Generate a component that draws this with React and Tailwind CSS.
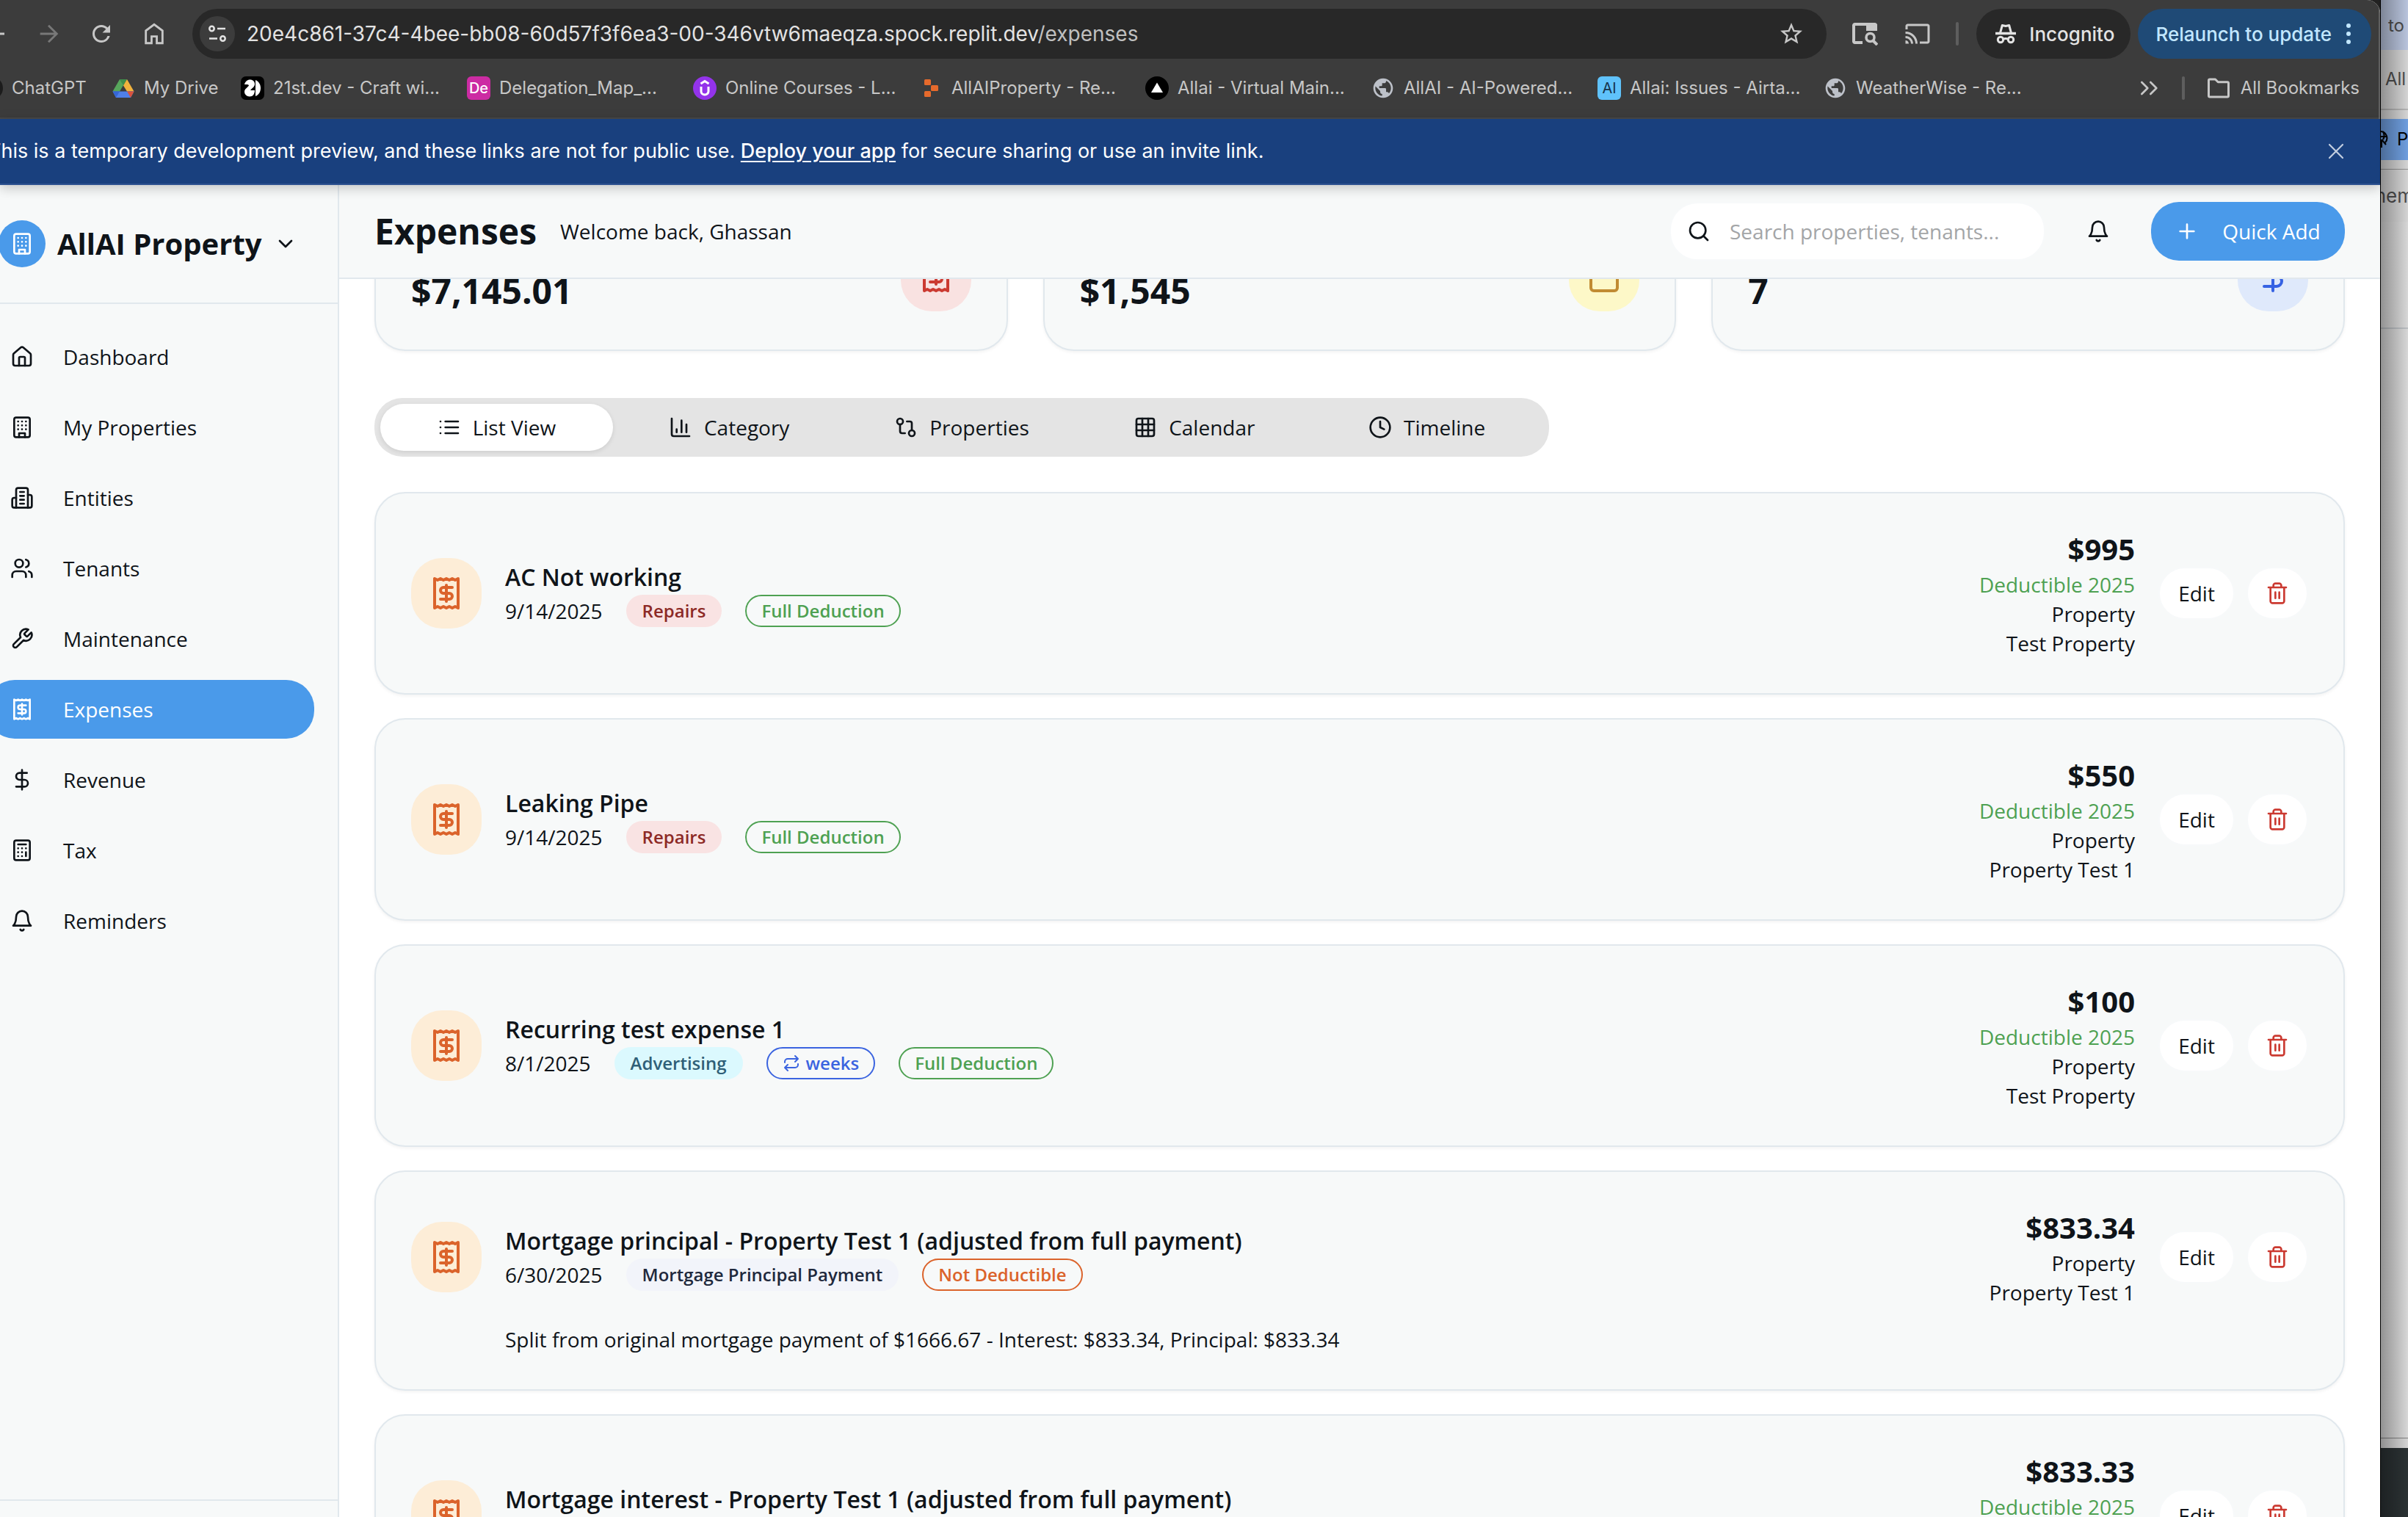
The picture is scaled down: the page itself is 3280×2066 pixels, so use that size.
import React from "react";
import { MdCast, MdRefresh, MdPublic, MdStarOutline } from "react-icons/md";

function Icon({ className = "size-8", strokeWidth = 2, children }) {
  return (
    <svg
      viewBox="0 0 24 24"
      fill="none"
      stroke="currentColor"
      strokeWidth={strokeWidth}
      strokeLinecap="round"
      strokeLinejoin="round"
      aria-hidden="true"
      className={`shrink-0 ${className}`}
    >
      {children}
    </svg>
  );
}

const HouseIcon = (p) => (
  <Icon {...p}>
    <path d="M15 21v-8a1 1 0 0 0-1-1h-4a1 1 0 0 0-1 1v8" />
    <path d="M3 10a2 2 0 0 1 .709-1.528l7-5.999a2 2 0 0 1 2.582 0l7 5.999A2 2 0 0 1 21 10v9a2 2 0 0 1-2 2H5a2 2 0 0 1-2-2z" />
  </Icon>
);
const BuildingIcon = (p) => (
  <Icon {...p}>
    <rect width="16" height="20" x="4" y="2" rx="2" />
    <path d="M9 22v-4h6v4M8 6h.01M16 6h.01M12 6h.01M12 10h.01M12 14h.01M16 10h.01M16 14h.01M8 10h.01M8 14h.01" />
  </Icon>
);
const OfficesIcon = (p) => (
  <Icon {...p}>
    <path d="M6 22V4a2 2 0 0 1 2-2h8a2 2 0 0 1 2 2v18Z" />
    <path d="M6 12H4a2 2 0 0 0-2 2v6a2 2 0 0 0 2 2h2" />
    <path d="M18 9h2a2 2 0 0 1 2 2v9a2 2 0 0 1-2 2h-2" />
    <path d="M10 6h4M10 10h4M10 14h4M10 18h4" />
  </Icon>
);
const UsersIcon = (p) => (
  <Icon {...p}>
    <path d="M16 21v-2a4 4 0 0 0-4-4H6a4 4 0 0 0-4 4v2" />
    <circle cx="9" cy="7" r="4" />
    <path d="M22 21v-2a4 4 0 0 0-3-3.87M16 3.13a4 4 0 0 1 0 7.75" />
  </Icon>
);
const WrenchIcon = (p) => (
  <Icon {...p}>
    <path d="M14.7 6.3a1 1 0 0 0 0 1.4l1.6 1.6a1 1 0 0 0 1.4 0l3.77-3.77a6 6 0 0 1-7.94 7.94l-6.91 6.91a2.12 2.12 0 0 1-3-3l6.91-6.91a6 6 0 0 1 7.94-7.94l-3.76 3.76z" />
  </Icon>
);
const ReceiptIcon = (p) => (
  <Icon {...p}>
    <path d="M4 2v20l2-1 2 1 2-1 2 1 2-1 2 1 2-1 2 1V2l-2 1-2-1-2 1-2-1-2 1-2-1-2 1Z" />
    <path d="M16 8h-6a2 2 0 1 0 0 4h4a2 2 0 1 1 0 4H8M12 17.5v-11" />
  </Icon>
);
const DollarIcon = (p) => (
  <Icon {...p}>
    <path d="M12 2v20M17 5H9.5a3.5 3.5 0 0 0 0 7h5a3.5 3.5 0 0 1 0 7H6" />
  </Icon>
);
const CalculatorIcon = (p) => (
  <Icon {...p}>
    <rect width="16" height="20" x="4" y="2" rx="2" />
    <path d="M8 6h8M16 14v4M16 10h.01M12 10h.01M8 10h.01M12 14h.01M8 14h.01M12 18h.01M8 18h.01" />
  </Icon>
);
const BellIcon = (p) => (
  <Icon {...p}>
    <path d="M6 8a6 6 0 0 1 12 0c0 7 3 9 3 9H3s3-2 3-9" />
    <path d="M10.3 21a1.94 1.94 0 0 0 3.4 0" />
  </Icon>
);
const ListIcon = (p) => (
  <Icon {...p}>
    <path d="M8 6h13M8 12h13M8 18h13M3 6h.01M3 12h.01M3 18h.01" />
  </Icon>
);
const ChartIcon = (p) => (
  <Icon {...p}>
    <path d="M3 3v16a2 2 0 0 0 2 2h16M18 17V9M13 17V5M8 17v-3" />
  </Icon>
);
const CompareIcon = (p) => (
  <Icon {...p}>
    <circle cx="18" cy="18" r="3" />
    <circle cx="6" cy="6" r="3" />
    <path d="M13 6h3a2 2 0 0 1 2 2v7M11 18H8a2 2 0 0 1-2-2V9" />
  </Icon>
);
const GridIcon = (p) => (
  <Icon {...p}>
    <rect width="18" height="18" x="3" y="3" rx="2" />
    <path d="M3 9h18M3 15h18M9 3v18M15 3v18" />
  </Icon>
);
const ClockIcon = (p) => (
  <Icon {...p}>
    <circle cx="12" cy="12" r="10" />
    <path d="M12 6v6l4 2" />
  </Icon>
);
const CalendarIcon = (p) => (
  <Icon {...p}>
    <path d="M8 2v4M16 2v4M3 10h18" />
    <rect width="18" height="18" x="3" y="4" rx="2" />
  </Icon>
);
const TrashIcon = (p) => (
  <Icon {...p}>
    <path d="M3 6h18M19 6v14c0 1-1 2-2 2H7c-1 0-2-1-2-2V6M8 6V4c0-1 1-2 2-2h4c1 0 2 1 2 2v2M10 11v6M14 11v6" />
  </Icon>
);
const RepeatIcon = (p) => (
  <Icon {...p}>
    <path d="m17 2 4 4-4 4M3 11v-1a4 4 0 0 1 4-4h14M7 22l-4-4 4-4M21 13v1a4 4 0 0 1-4 4H3" />
  </Icon>
);
const ArrowIcon = (p) => (
  <Icon strokeWidth={2} {...p}>
    <path strokeLinecap="butt" strokeLinejoin="miter" d="M4 12h15M12 4l8 8-8 8" />
  </Icon>
);

/* ---------- browser chrome ---------- */

function ToolButton({ label, children }) {
  return (
    <button aria-label={label} className="flex h-[68px] w-[72px] shrink-0 items-center justify-center">
      {children}
    </button>
  );
}

function AddressRow() {
  return (
    <div className="-ml-[42px] mt-3 flex h-[68px] items-center pr-3 text-[#c7c7c7]">
      <ToolButton label="Back"><ArrowIcon className="size-9 rotate-180" /></ToolButton>
      <ToolButton label="Forward"><ArrowIcon className="size-[34px] text-[#787878]" /></ToolButton>
      <ToolButton label="Reload"><MdRefresh className="size-9" /></ToolButton>
      <ToolButton label="Home">
        <svg viewBox="0 0 24 24" fill="none" stroke="currentColor" strokeWidth="2" className="size-[34px]" aria-hidden="true">
          <path d="M4 21V9l8-6 8 6v12h-5.500v-6.500h-5V21z" />
        </svg>
      </ToolButton>
      <div className="ml-4 flex h-[68px] min-w-0 flex-1 items-center rounded-full bg-[#282828] pl-[10px] pr-[30px]">
        <button aria-label="Site information" className="mr-4 flex size-12 shrink-0 items-center justify-center rounded-full bg-[#3c3c3c] text-[#e3e3e3]">
          <svg viewBox="0 0 24 24" fill="none" stroke="currentColor" strokeWidth="2.500" className="size-6" aria-hidden="true">
            <circle cx="4.500" cy="5" r="3.200" />
            <path d="M12 5h11M1 18.500h11" />
            <circle cx="19.500" cy="18.500" r="3.200" />
          </svg>
        </button>
        <p className="flex-1 truncate font-[Inter,sans-serif] text-[28px] leading-9 text-[#e3e3e3]">
          20e4c861-37c4-4bee-bb08-60d57f3f6ea3-00-346vtw6maeqza.spock.replit.dev
          <span className="text-[#c0c0c0]">/expenses</span>
        </p>
        <button aria-label="Bookmark this tab"><MdStarOutline className="size-9" /></button>
      </div>
      <div className="ml-4 flex items-center">
        <ToolButton label="Lens search">
          <svg viewBox="0 0 36 32" fill="none" stroke="currentColor" strokeWidth="4" className="h-8 w-9" aria-hidden="true">
            <path d="M15 28H4.500a1.500 1.500 0 0 1-1.500-1.500v-22A1.500 1.500 0 0 1 4.500 3h27A1.500 1.500 0 0 1 33 4.500V11" />
            <path d="M20 3h15v9H20z" fill="currentColor" stroke="none" />
            <circle cx="25.500" cy="21" r="5.500" strokeWidth="3.500" />
            <path d="m29 25 6 6" />
          </svg>
        </ToolButton>
        <ToolButton label="Cast"><MdCast className="size-9" /></ToolButton>
      </div>
      <span className="ml-4 h-8 w-1 rounded-full bg-[#5e5e5e]" />
      <button className="ml-6 flex h-[68px] items-center gap-4 rounded-full bg-[#282828] pl-6 pr-[22px] font-[Inter,sans-serif] text-[26px] font-medium text-[#e3e3e3]">
        <svg viewBox="0 0 32 32" fill="none" stroke="currentColor" strokeWidth="3" className="size-8" aria-hidden="true">
          <path d="M2 15.500h28" strokeWidth="3.500" />
          <path d="M8.500 15 11.300 4.500l4.700 1 4.700-1L23.500 15" strokeLinejoin="round" />
          <circle cx="9" cy="24" r="3.700" />
          <circle cx="23" cy="24" r="3.700" />
          <path d="M12.500 23.500c2-1.200 5-1.200 7 0" />
        </svg>
        Incognito
      </button>
      <button className="ml-[10px] flex h-[68px] items-center gap-5 rounded-full bg-[#1f4a76] pl-6 pr-7 font-[Inter,sans-serif] text-[26px] font-medium text-[#c2e7ff]">
        Relaunch to update
        <span className="flex flex-col gap-[5px]" aria-hidden="true">
          <span className="size-[6px] rounded-full bg-[#c2e7ff]" />
          <span className="size-[6px] rounded-full bg-[#c2e7ff]" />
          <span className="size-[6px] rounded-full bg-[#c2e7ff]" />
        </span>
      </button>
    </div>
  );
}

const chatGptMark = (
  <svg viewBox="0 0 32 32" className="size-8" aria-hidden="true">
    <circle cx="16" cy="16" r="16" fill="#1c1c1c" />
    <circle cx="16" cy="16" r="10" fill="none" stroke="#555" strokeWidth="2" />
  </svg>
);
const driveMark = (
  <svg viewBox="0 0 32 32" className="size-8" aria-hidden="true">
    <path d="M11 4h10l-5 9z" fill="#3f8f4c" />
    <path d="M11 4 1.500 20.500h9.500L16 12z" fill="#57a65c" />
    <path d="M21 4 16 12.500l5 8h9.500z" fill="#f2b33d" />
    <path d="M1.500 20.500h29L26 29H6z" fill="#4f7fe8" />
    <path d="M1.500 20.500H11L6 29z" fill="#3567d6" />
    <path d="M21 20.500h9.500L26 29z" fill="#d9513c" />
  </svg>
);
const twentyFirstMark = (
  <svg viewBox="0 0 32 32" className="size-8" aria-hidden="true">
    <rect width="32" height="32" rx="7" fill="#000" />
    <path d="M5 11C6 7 9 4.500 12.500 4.500c4 0 6.500 2.500 6.500 6 0 4-4 5.500-6 8.500h6c0 5-2.500 8.500-7 8.500-4 0-7-3-7-6.500 0-4 4-5.500 6-8.500 0-1.500-3-1.500-6-1.500z" fill="#fff" />
    <path d="M20 5c4.500 2 7 6 7 11s-2.500 9-7 11z" fill="#fff" />
  </svg>
);
const udemyMark = (
  <svg viewBox="0 0 32 32" className="size-8" aria-hidden="true">
    <circle cx="16" cy="16" r="16" fill="#9333ea" />
    <path d="M11 14v6.500a5 4.500 0 0 0 10 0V14M10.500 10 16 6.500l5.500 3.500" fill="none" stroke="#fff" strokeWidth="3" />
  </svg>
);
const replitMark = (
  <svg viewBox="0 0 32 32" className="size-8" fill="#e66a2c" aria-hidden="true">
    <rect x="7" y="4" width="9" height="8" rx="1.500" />
    <rect x="16" y="12" width="10" height="8" rx="1.500" />
    <rect x="7" y="20" width="9" height="8" rx="1.500" />
  </svg>
);
const vercelMark = (
  <svg viewBox="0 0 32 32" className="size-8" aria-hidden="true">
    <circle cx="16" cy="16" r="16" fill="#000" />
    <path d="m16 8.500 8 13.500H8z" fill="#fff" />
  </svg>
);
const globeMark = <MdPublic className="size-8 text-[#bdc1c9]" />;
const deMark = (
  <span className="flex size-8 items-center justify-center rounded-[6px] bg-[#cc2ca3] font-[Inter,sans-serif] text-[20px] font-medium leading-8 text-white">De</span>
);
const aiMark = (
  <span className="flex size-8 items-center justify-center rounded-[6px] bg-[#5fc2fb] font-[Inter,sans-serif] text-[20px] leading-8 text-[#16324a]">AI</span>
);

const bookmarks = [
  { label: "21st.dev - Craft wi...", mark: twentyFirstMark },
  { label: "Delegation_Map_...", mark: deMark },
  { label: "Online Courses - L...", mark: udemyMark },
  { label: "AllAIProperty - Re...", mark: replitMark },
  { label: "Allai - Virtual Main...", mark: vercelMark },
  { label: "AllAI - AI-Powered...", mark: globeMark },
  { label: "Allai: Issues - Airta...", mark: aiMark },
  { label: "WeatherWise - Re...", mark: globeMark },
];

function Bookmark({ label, mark, className }) {
  return (
    <a href="#bookmark" className={`flex shrink-0 items-center gap-3 whitespace-nowrap ${className}`}>
      <span className="shrink-0">{mark}</span>
      {label}
    </a>
  );
}

function BookmarksRow() {
  return (
    <nav aria-label="Bookmarks" className="-ml-7 flex h-20 items-center pr-7 font-[Inter,sans-serif] text-[24px] leading-8 text-[#c7c7c7]">
      <Bookmark label="ChatGPT" mark={chatGptMark} className="w-[180px]" />
      <Bookmark label="My Drive" mark={driveMark} className="w-[176px]" />
      {bookmarks.map((b) => (
        <Bookmark key={b.label} {...b} className="w-[308px]" />
      ))}
      <button aria-label="More bookmarks" className="ml-auto">
        <Icon className="size-8" strokeWidth={2}><path d="m4 6 6 6-6 6M13 6l6 6-6 6" /></Icon>
      </button>
      <span className="ml-7 h-8 w-1 rounded-full bg-[#5e5e5e]" />
      <a href="#all" className="ml-7 flex items-center gap-3">
        <Icon className="size-9" strokeWidth={2}><path d="M3 5a1 1 0 0 1 1-1h5l2.500 2.500H20a1 1 0 0 1 1 1V19a1 1 0 0 1-1 1H4a1 1 0 0 1-1-1z" /></Icon>
        All Bookmarks
      </a>
    </nav>
  );
}

function PreviewBanner() {
  return (
    <div className="relative z-20 flex h-[90px] shrink-0 items-center justify-between border-b-2 border-[#2f5391] bg-[#19407e] pr-12 font-[Inter,sans-serif] text-[27px] leading-9 text-white shadow-[0_4px_16px_rgba(0,0,0,0.22)]">
      <p className="-ml-4 whitespace-nowrap">
        This is a temporary development preview, and these links are not for public use.{" "}
        <a href="#deploy" className="font-medium underline underline-offset-4">Deploy your app</a>{" "}
        for secure sharing or use an invite link.
      </p>
      <button aria-label="Dismiss" className="text-[#c3cee0]">
        <Icon className="size-6" strokeWidth={2.2}><path d="M3 3l18 18M21 3 3 21" /></Icon>
      </button>
    </div>
  );
}

/* ---------- application ---------- */

const navItems = [
  { label: "Dashboard", icon: HouseIcon },
  { label: "My Properties", icon: BuildingIcon },
  { label: "Entities", icon: OfficesIcon },
  { label: "Tenants", icon: UsersIcon },
  { label: "Maintenance", icon: WrenchIcon },
  { label: "Expenses", icon: ReceiptIcon, active: true },
  { label: "Revenue", icon: DollarIcon },
  { label: "Tax", icon: CalculatorIcon },
  { label: "Reminders", icon: BellIcon },
];

function Sidebar() {
  return (
    <aside className="-ml-[50px] flex w-[512px] shrink-0 flex-col border-r-2 border-[#e1e8ed] bg-[#f7f9f9]">
      <div className="flex h-[162px] shrink-0 items-center gap-4 border-b-2 border-[#e1e8ed] px-12">
        <span className="flex size-16 shrink-0 items-center justify-center rounded-full bg-[#4a9aea] text-white">
          <BuildingIcon />
        </span>
        <button className="flex items-center gap-4 whitespace-nowrap text-[40px] font-bold leading-[56px]">
          AllAI Property
          <Icon><path d="m6 9 6 6 6-6" /></Icon>
        </button>
      </div>
      <nav className="flex flex-1 flex-col gap-4 p-8">
        {navItems.map(({ label, icon: NavIcon, active }) => (
          <a
            key={label}
            href={`#${label}`}
            aria-current={active ? "page" : undefined}
            className={`flex h-20 items-center gap-10 rounded-[38px] px-8 text-[28px] font-medium leading-10 ${
              active ? "bg-[#4a9aea] text-white" : ""
            }`}
          >
            <NavIcon />
            {label}
          </a>
        ))}
      </nav>
      <div className="h-6 shrink-0 border-t-2 border-[#e1e8ed]" />
    </aside>
  );
}

function Header() {
  return (
    <header className="flex h-[128px] shrink-0 items-center border-b-2 border-[#e1e8ed] bg-[#f7f9f9] px-12">
      <h1 className="text-[48px] font-bold leading-[64px]">Expenses</h1>
      <p className="ml-8 flex-1 text-[28px] leading-10">Welcome back, Ghassan</p>
      <label className="relative w-[512px]">
        <span className="absolute inset-y-0 left-6 flex items-center">
          <Icon><circle cx="11" cy="11" r="8" /><path d="m21 21-4.300-4.300" /></Icon>
        </span>
        <input
          type="text"
          aria-label="Search"
          placeholder="Search properties, tenants..."
          className="h-20 w-full rounded-[38px] border-2 border-[#f7f9fa] bg-white pl-20 pr-6 text-[28px] placeholder:text-[#a3a5a7]"
        />
      </label>
      <button aria-label="Notifications" className="ml-8 flex size-20 items-center justify-center">
        <BellIcon />
      </button>
      <button className="ml-8 flex h-20 w-[264px] items-center justify-center gap-8 rounded-[38px] bg-[#4a9aea] text-[28px] font-medium text-white">
        <Icon><path d="M5 12h14M12 5v14" /></Icon>
        Quick Add
      </button>
    </header>
  );
}

const stats = [
  { label: "Total Expenses", value: "$7,145.01", icon: ReceiptIcon, tone: "bg-[#f9e2e1] text-[#cb3a31]" },
  { label: "This Month", value: "$1,545", icon: CalendarIcon, tone: "bg-[#fdf8c8] text-[#c18b33]" },
  { label: "Total Entries", value: "7", icon: DollarIcon, tone: "bg-[#dfe9fb] text-[#3662e3]" },
];

function StatCards() {
  return (
    <section className="grid grid-cols-3 gap-12">
      {stats.map(({ label, value, icon: StatIcon, tone }) => (
        <div
          key={label}
          aria-label={label}
          className="flex items-end justify-between rounded-[42px] border-2 border-[#e1e8ed] bg-[#f7f9f9] p-12 shadow-[0_2px_4px_rgba(0,0,0,0.05)]"
        >
          <p className="text-[48px] font-bold leading-[64px]">{value}</p>
          <span className={`mb-1 flex size-24 items-center justify-center rounded-[42px] ${tone}`}>
            <StatIcon className="size-12" />
          </span>
        </div>
      ))}
    </section>
  );
}

const tabs = [
  { label: "List View", icon: ListIcon, active: true },
  { label: "Category", icon: ChartIcon },
  { label: "Properties", icon: CompareIcon },
  { label: "Calendar", icon: GridIcon },
  { label: "Timeline", icon: ClockIcon },
];

function ViewTabs() {
  return (
    <div role="tablist" className="mt-16 grid max-w-[1600px] grid-cols-5 rounded-[38px] bg-[#e4e4e4] p-2">
      {tabs.map(({ label, icon: TabIcon, active }) => (
        <button
          key={label}
          role="tab"
          aria-selected={!!active}
          className={`flex h-16 items-center justify-center gap-4 rounded-[34px] text-[28px] font-medium ${
            active ? "bg-white shadow-[0_2px_6px_rgba(0,0,0,0.1)]" : ""
          }`}
        >
          <TabIcon />
          {label}
        </button>
      ))}
    </div>
  );
}

const badgeTones = {
  repairs: "border-transparent bg-[#f9e3e3] text-[#8d2a26]",
  advertising: "border-transparent bg-[#dbf9fe] text-[#2f5f78]",
  plain: "border-transparent bg-[#f2f4fa] text-[#1f293d]",
  blue: "border-[#3b64e0] text-[#3b64e0]",
  green: "border-[#4ea152] text-[#4ea152]",
  orange: "border-[#db632b] text-[#db632b]",
};

const fullDeduction = { text: "Full Deduction", tone: "green" };

const expenses = [
  {
    title: "AC Not working",
    date: "9/14/2025",
    badges: [{ text: "Repairs", tone: "repairs" }, fullDeduction],
    amount: "$995",
    deductible: true,
    property: "Test Property",
  },
  {
    title: "Leaking Pipe",
    date: "9/14/2025",
    badges: [{ text: "Repairs", tone: "repairs" }, fullDeduction],
    amount: "$550",
    deductible: true,
    property: "Property Test 1",
  },
  {
    title: "Recurring test expense 1",
    date: "8/1/2025",
    badges: [{ text: "Advertising", tone: "advertising" }, { text: "weeks", tone: "blue", repeat: true }, fullDeduction],
    amount: "$100",
    deductible: true,
    property: "Test Property",
  },
  {
    title: "Mortgage principal - Property Test 1 (adjusted from full payment)",
    date: "6/30/2025",
    badges: [{ text: "Mortgage Principal Payment", tone: "plain" }, { text: "Not Deductible", tone: "orange" }],
    amount: "$833.34",
    property: "Property Test 1",
    note: "Split from original mortgage payment of $1666.67 - Interest: $833.34, Principal: $833.34",
  },
  {
    title: "Mortgage interest - Property Test 1 (adjusted from full payment)",
    date: "6/30/2025",
    badges: [{ text: "Mortgage", tone: "plain" }, fullDeduction],
    amount: "$833.33",
    deductible: true,
    property: "Property Test 1",
  },
];

function ExpenseCard({ title, date, badges, amount, deductible, property, note }) {
  return (
    <li className="rounded-[42px] border-2 border-[#e1e8ed] bg-[#f7f9f9] p-12 shadow-[0_2px_4px_rgba(0,0,0,0.05)]">
      <div className="flex items-center justify-between">
        <div className="flex items-center gap-8">
          <span className="flex size-24 shrink-0 items-center justify-center rounded-[42px] bg-[#fdedd7] text-[#db632b]">
            <ReceiptIcon className="size-12" />
          </span>
          <div>
            <h3 className="text-[32px] font-semibold leading-[48px]">{title}</h3>
            <div className="flex items-center gap-8 text-[28px] leading-10">
              {date}
              {badges.map(({ text, tone, repeat }) => (
                <span key={text} className={`flex items-center gap-2 rounded-full border-2 px-5 py-1 text-[24px] font-semibold leading-8 ${badgeTones[tone]}`}>
                  {repeat && <RepeatIcon className="size-6" />}
                  {text}
                </span>
              ))}
            </div>
          </div>
        </div>
        <div className="flex items-center">
          <div className="mr-8 text-right text-[28px] leading-10">
            <p className="text-[40px] font-bold leading-[56px]">{amount}</p>
            {deductible && <p className="text-[#4ea152]">Deductible 2025</p>}
            <p>Property</p>
            <p>{property}</p>
          </div>
          <button className="mr-4 h-[72px] w-[104px] rounded-[38px] border-2 border-[#f7f9fa] bg-white text-[28px] font-medium">Edit</button>
          <button aria-label={`Delete ${title}`} className="h-[72px] rounded-[38px] border-2 border-[#f7f9fa] bg-white px-6 text-[#cb3a31]">
            <TrashIcon />
          </button>
        </div>
      </div>
      {note && <p className="ml-32 mt-6 text-[28px] leading-10">{note}</p>}
    </li>
  );
}

/* ---------- sliver of the window behind ---------- */

function BackgroundWindow() {
  return (
    <div className="relative flex w-[38px] shrink-0 flex-col overflow-hidden border-l border-black bg-[#dfdfdf] font-[Inter,sans-serif] text-[24px] text-[#505050]">
      <p className="h-[68px] shrink-0 bg-[#c2cee8] pl-[10px] pt-[17px] leading-9">to</p>
      <p className="h-[80px] shrink-0 pl-[6px] pt-[22px] leading-9">All</p>
      <div className="h-[14px] shrink-0 border-t-2 border-[#bdbdbd]" />
      <p className="flex h-14 shrink-0 items-center gap-3 bg-[#74a6ea] text-black">
        <svg viewBox="0 0 10 24" fill="none" stroke="currentColor" strokeWidth="2" className="h-6 w-[10px] shrink-0" aria-hidden="true">
          <path d="M0 1a9 9 0 0 1 6 15M0 8h9M3 1c2 4 2 8 0 11M1 12l6 7M1 12v11" />
        </svg>
        P
      </p>
      <div className="h-3 shrink-0" />
      <p className="flex h-[72px] shrink-0 justify-end border-t border-[#999] pt-[18px] text-[26px] leading-9">
        <span className="-mr-2">nem</span>
      </p>
      <div className="h-[144px] shrink-0 bg-[#e2e2e2]" />
      <div className="flex-1 border-t-2 border-[#c4c8cc] bg-[#e2e2e2]" />
      <div className="h-[14px] shrink-0 border-t border-[#888]" />
      <div className="h-[94px] shrink-0 bg-[#2d3436]" />
      <div className="absolute inset-0 bg-linear-to-r from-black/35 to-black/5" />
    </div>
  );
}

export default function App() {
  return (
    <div className="flex h-screen overflow-hidden bg-[#222] font-['Open_Sans',sans-serif] text-[#0f1419]">
      <div className="relative flex min-w-0 flex-1 flex-col overflow-hidden rounded-tr-[18px] bg-white">
        <div className="shrink-0 overflow-hidden border-b-2 border-[#484848] bg-[#3c3c3c]">
          <AddressRow />
          <BookmarksRow />
        </div>
        <PreviewBanner />
        <div className="flex min-h-0 flex-1">
          <Sidebar />
          <div className="flex min-w-0 flex-1 flex-col">
            <Header />
            <main className="flex min-h-0 flex-1 flex-col overflow-hidden px-12">
              <div className="-mt-[102px] shrink-0">
                <StatCards />
                <ViewTabs />
                <ul className="mt-12 flex flex-col gap-8">
                  {expenses.map((e) => (
                    <ExpenseCard key={e.title} {...e} />
                  ))}
                </ul>
              </div>
            </main>
          </div>
        </div>
        <div className="pointer-events-none absolute inset-y-0 right-0 w-[2px] bg-white/20" />
      </div>
      <BackgroundWindow />
    </div>
  );
}
